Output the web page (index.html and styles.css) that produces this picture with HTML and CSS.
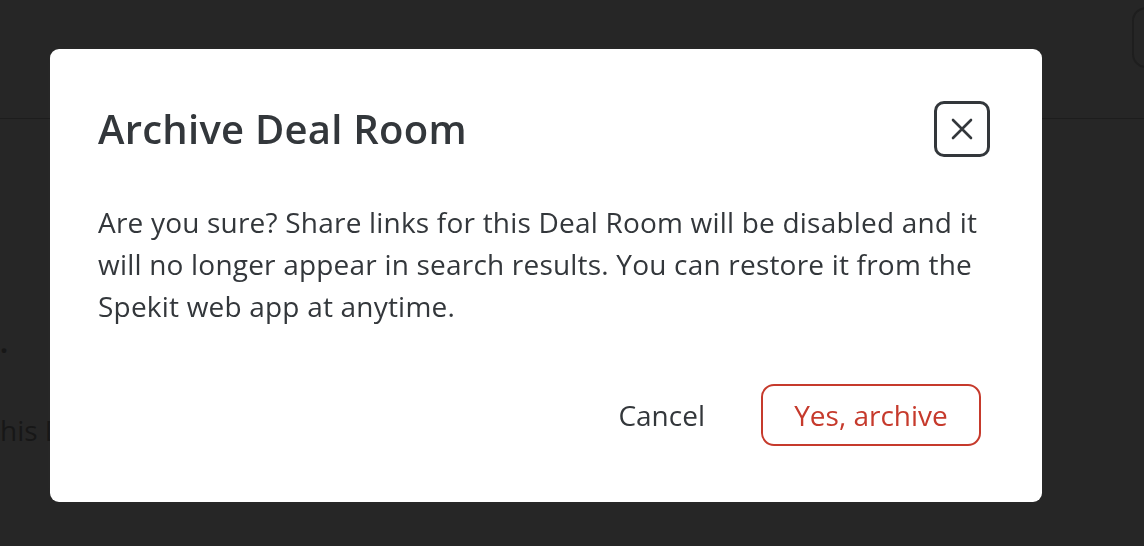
FILE: index.html
```html
<!DOCTYPE html>
<html lang="en">
<head>
<meta charset="utf-8">
<title>Archive Deal Room</title>
<link rel="stylesheet" href="styles.css">
</head>
<body>
  <div class="page">
    <header class="page-header">
      <div class="header-spacer"></div>
      <div class="header-action"></div>
    </header>
    <main class="page-content">
      <p class="bg-heading">.</p>
      <p class="bg-text">this Deal Room will be disabled</p>
    </main>
  </div>

  <div class="overlay">
    <div class="modal" role="dialog" aria-labelledby="modal-title">
      <div class="modal-header">
        <h2 id="modal-title" class="modal-title">Archive Deal Room</h2>
        <button class="close-btn" aria-label="Close">
          <svg width="22" height="22" viewBox="0 0 22 22" fill="none" stroke="currentColor" stroke-width="2.6" stroke-linecap="round">
            <path d="M2 2 L20 20 M20 2 L2 20"/>
          </svg>
        </button>
      </div>
      <p class="modal-body">Are you sure? Share links for this Deal Room will be disabled and it will no longer appear in search results. You can restore it from the Spekit web app at anytime.</p>
      <div class="modal-footer">
        <button class="btn btn-text">Cancel</button>
        <button class="btn btn-danger-outline">Yes, archive</button>
      </div>
    </div>
  </div>
</body>
</html>
```

FILE: styles.css
```css
* { box-sizing: border-box; }

html, body {
  margin: 0;
  padding: 0;
  height: 100%;
}

body {
  background: #262626;
  font-family: "Open Sans", "Noto Sans", sans-serif;
  color: #33373b;
  overflow: hidden;
}

.page {
  height: 100%;
  display: flex;
  flex-direction: column;
}

.page-header {
  height: 119px;
  border-bottom: 1px solid #1d1d1d;
  display: flex;
  align-items: flex-start;
  padding-top: 7px;
}

.header-spacer { flex: 1; }

.header-action {
  width: 60px;
  height: 61px;
  margin-right: -48px;
  border: 2px solid #1e1e1e;
  border-radius: 14px;
}

.page-content {
  padding-top: 208px;
}

.bg-heading {
  margin: 0;
  font-size: 28px;
  font-weight: 700;
  line-height: 30px;
  color: #171717;
}

.bg-text {
  margin: 54px 0 0 -10px;
  font-size: 28px;
  line-height: 38px;
  color: #171717;
  white-space: nowrap;
}

.overlay {
  position: fixed;
  inset: 0;
  display: flex;
  align-items: flex-start;
  padding: 49px 0 0 50px;
}

.modal {
  width: 992px;
  height: 453px;
  background: #ffffff;
  border-radius: 9px;
  padding: 52px 52px 56px 48px;
  box-shadow: 0 0 14px rgba(255, 255, 255, 0.02);
  display: flex;
  flex-direction: column;
}

.modal-header {
  display: flex;
  align-items: center;
  justify-content: space-between;
  height: 56px;
}

.modal-title {
  margin: 0;
  font-size: 40px;
  font-weight: 600;
  line-height: 54px;
  letter-spacing: 0.25px;
  color: #33373b;
}

.close-btn {
  width: 56px;
  height: 56px;
  padding: 0;
  border: 3px solid #33373b;
  border-radius: 10px;
  background: #fff;
  color: #33373b;
  display: flex;
  align-items: center;
  justify-content: center;
  cursor: pointer;
}

.modal-body {
  margin: 44px 0 0;
  font-size: 28px;
  line-height: 42px;
  letter-spacing: 0.2px;
  color: #33373b;
  max-width: 905px;
}

.modal-footer {
  margin-top: auto;
  display: flex;
  justify-content: flex-end;
  align-items: center;
  gap: 28px;
  padding-right: 9px;
}

.btn {
  font-family: inherit;
  font-size: 28px;
  line-height: 38px;
  background: #fff;
  cursor: pointer;
}

.btn-text {
  border: none;
  color: #33373b;
  padding: 0 28px 0 0;
}

.btn-danger-outline {
  width: 220px;
  height: 62px;
  border: 2px solid #c63a2c;
  border-radius: 13px;
  color: #c63a2c;
}
```
